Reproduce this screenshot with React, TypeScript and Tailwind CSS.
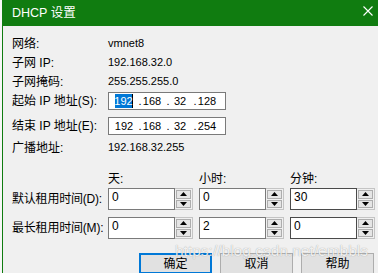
const ipStart: [string, number, number, boolean][] = [
  ["192", 6, 18, true],
  [".", 4, 6, false],
  ["168", 0, 18, false],
  [".", 4, 6, false],
  ["32", 3, 12, false],
  [".", 6, 6, false],
  ["128", 0, 18, false],
];

const ipEnd: [string, number, number, boolean][] = [
  ["192", 6, 18, false],
  [".", 4, 6, false],
  ["168", 0, 18, false],
  [".", 4, 6, false],
  ["32", 3, 12, false],
  [".", 6, 6, false],
  ["254", 0, 18, false],
];

function IpBox({ parts }: { parts: [string, number, number, boolean][] }) {
  return (
    <div className="flex h-[18px] w-[118px] shrink-0 items-center border border-[#7a7a7a] bg-white text-[11px]">
      {parts.map(([text, ml, w, sel], i) => (
        <span
          key={i}
          style={{ marginLeft: ml, width: w }}
          className={
            sel
              ? "flex h-[14px] items-center justify-center border-r border-black bg-[#0078d7] text-white"
              : "flex h-[14px] items-center justify-center text-black"
          }
        >
          {text}
        </span>
      ))}
    </div>
  );
}

function Spin({ value, dark }: { value: string; dark?: boolean }) {
  return (
    <div className="flex h-[22px] w-[85px] shrink-0">
      <div
        className={
          dark
            ? "flex-1 border border-[#4a4a4a] bg-white pl-[3px] pt-[1px] text-[12px] leading-[15px] text-black"
            : "flex-1 border border-[#7a7a7a] bg-white pl-[3px] pt-[1px] text-[12px] leading-[15px] text-black"
        }
      >
        {value}
      </div>
      <div className="flex w-[18px] flex-col gap-[1px] border-y border-r border-[#c4c4c4] bg-[#f0f0f0] p-[1px]">
        <div className="flex flex-1 items-center justify-center border border-[#adadad] bg-[#e5e5e5]">
          <svg width="7" height="4" viewBox="0 0 7 4">
            <path d="M0 4 L3.5 0 L7 4 Z" fill="#000" />
          </svg>
        </div>
        <div className="flex flex-1 items-center justify-center border border-[#adadad] bg-[#e5e5e5]">
          <svg width="7" height="4" viewBox="0 0 7 4">
            <path d="M0 0 L3.5 4 L7 0 Z" fill="#000" />
          </svg>
        </div>
      </div>
    </div>
  );
}

export default function App() {
  return (
    <div className="relative flex h-[273px] w-[378px] overflow-hidden bg-[#f0f0f0] font-['Liberation_Sans','Noto_Sans_CJK_SC',sans-serif] text-[12px] text-black">
      <div className="w-[2px] shrink-0 bg-[#f7f7f7]" />
      <div className="flex flex-1 flex-col border-l border-[#107c10]">
        {/* Title bar */}
        <div className="flex h-[26px] shrink-0 items-center justify-between bg-[#107c10] pl-[9px] pr-[4px] text-white">
          <span className="text-[12.5px] leading-none">DHCP 设置</span>
          <svg width="10" height="10" viewBox="0 0 10 10" className="mr-[1px] -mt-[5px]">
            <path d="M0.5 0.5 L9.5 9.5 M9.5 0.5 L0.5 9.5" stroke="#fff" strokeWidth="1.1" />
          </svg>
        </div>

        {/* Body */}
        <div className="flex shrink-0 flex-col pl-[9px] pt-[8px] whitespace-nowrap">
          <div className="flex h-[19px] items-center">
            <span className="w-[96px] shrink-0">网络:</span>
            <span className="text-[11px]">vmnet8</span>
          </div>
          <div className="flex h-[19px] items-center">
            <span className="w-[96px] shrink-0">子网 IP:</span>
            <span className="text-[11px]">192.168.32.0</span>
          </div>
          <div className="flex h-[19px] items-center">
            <span className="w-[96px] shrink-0">子网掩码:</span>
            <span className="text-[11px]">255.255.255.0</span>
          </div>
          <div className="mt-[1px] flex h-[18px] items-center">
            <span className="w-[96px] shrink-0">起始 IP 地址(S):</span>
            <IpBox parts={ipStart} />
          </div>
          <div className="mt-[7px] flex h-[18px] items-center">
            <span className="w-[96px] shrink-0">结束 IP 地址(E):</span>
            <IpBox parts={ipEnd} />
          </div>
          <div className="mt-[3px] flex h-[19px] items-center">
            <span className="w-[96px] shrink-0">广播地址:</span>
            <span className="text-[11px]">192.168.32.255</span>
          </div>

          {/* Lease times */}
          <div className="mt-[12px] flex h-[19px] items-center gap-[6px] pl-[96px]">
            <span className="w-[85px] shrink-0">天:</span>
            <span className="w-[85px] shrink-0">小时:</span>
            <span className="w-[85px] shrink-0">分钟:</span>
          </div>
          <div className="flex items-center gap-[6px]">
            <span className="w-[90px] shrink-0 tracking-[-0.2px]">默认租用时间(D):</span>
            <Spin value="0" />
            <Spin value="0" />
            <Spin value="30" dark />
          </div>
          <div className="mt-[7px] flex items-center gap-[6px]">
            <span className="w-[90px] shrink-0 tracking-[-0.2px]">最长租用时间(M):</span>
            <Spin value="0" />
            <Spin value="2" />
            <Spin value="0" dark />
          </div>
        </div>

        {/* Buttons */}
        <div className="mt-[14px] flex shrink-0 justify-end gap-[8px] pr-[4px]">
          <button className="flex h-[21px] w-[73px] items-center justify-center border-2 border-[#0078d7] bg-[#e1e1e1]">
            确定
          </button>
          <button className="flex h-[21px] w-[73px] items-center justify-center border border-[#adadad] bg-[#e1e1e1]">
            取消
          </button>
          <button className="flex h-[21px] w-[73px] items-center justify-center border border-[#adadad] bg-[#e1e1e1]">
            帮助
          </button>
        </div>
      </div>

      {/* Watermark */}
      <span className="pointer-events-none absolute left-[175px] top-[243px] text-[15.5px] leading-none text-white/85 [text-shadow:0_0_1px_rgba(0,0,0,0.4)]">
        https://blog.csdn.net/embbls
      </span>
    </div>
  );
}
